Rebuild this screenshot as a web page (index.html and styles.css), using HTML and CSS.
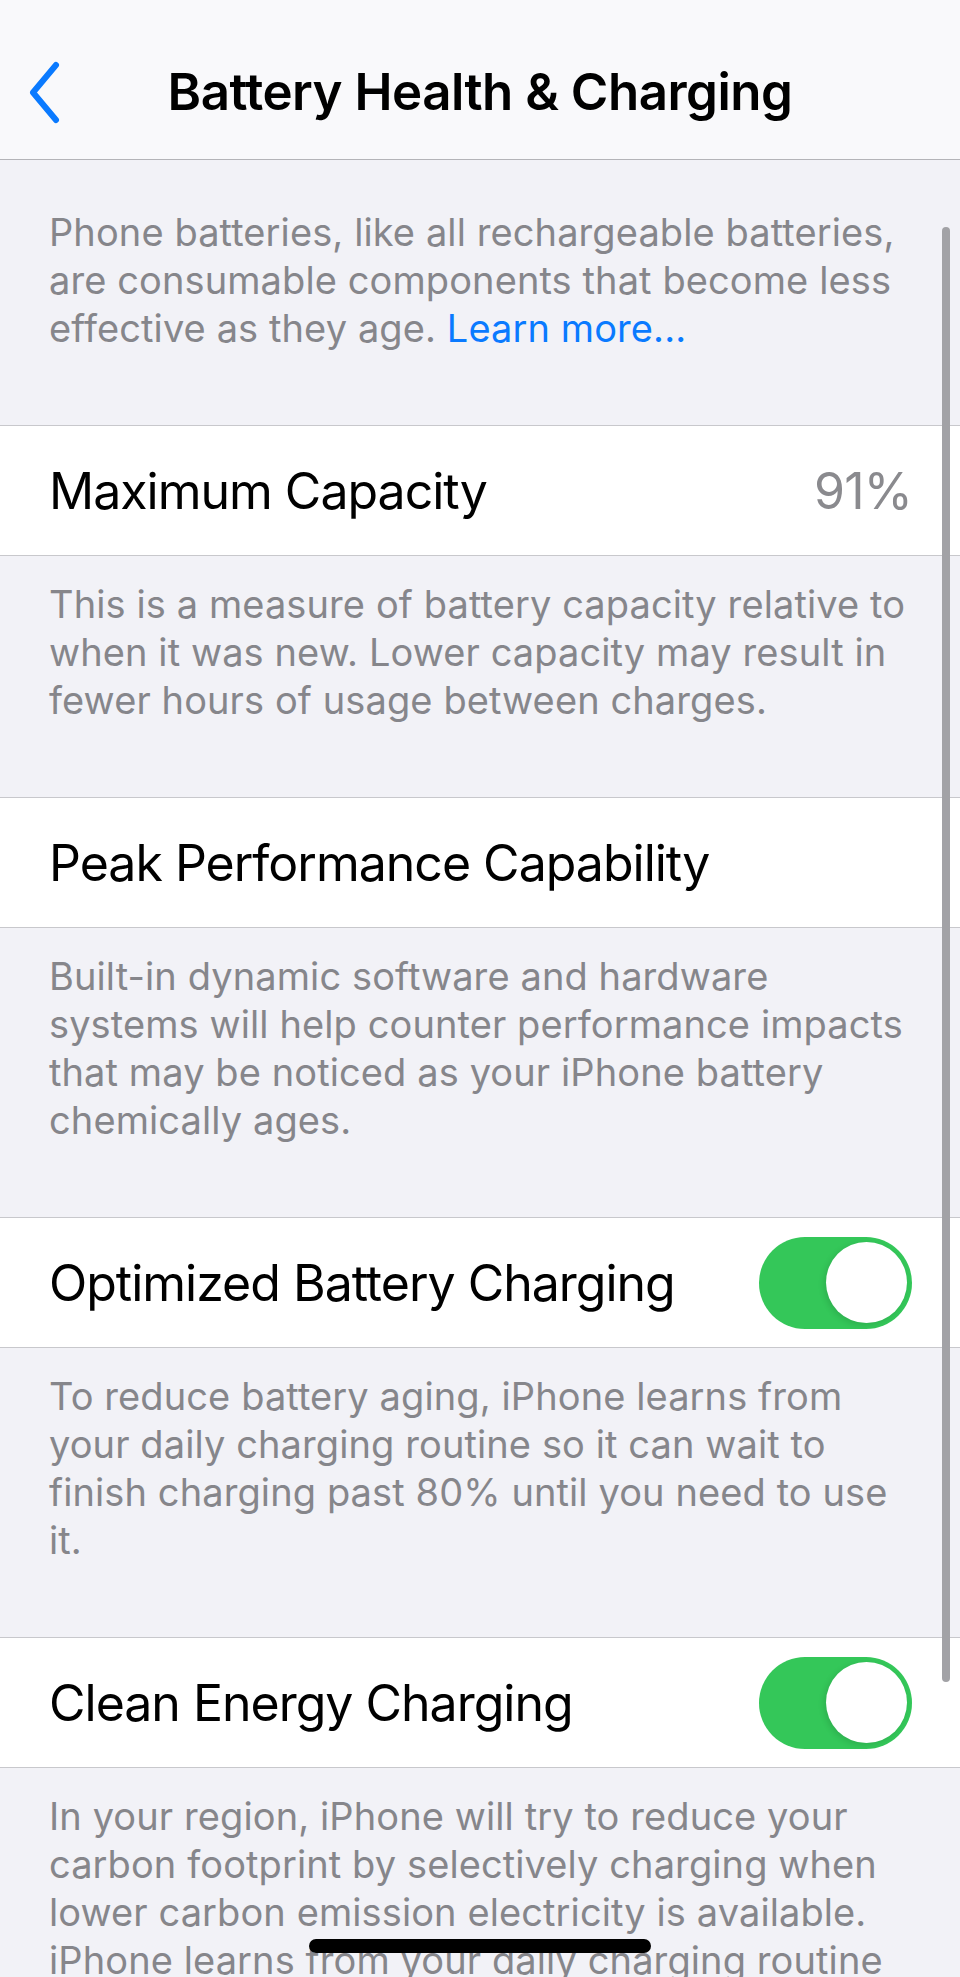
FILE: index.html
```html
<!DOCTYPE html>
<html lang="en">
<head>
    <meta charset="UTF-8">
    <meta name="viewport" content="width=device-width, initial-scale=1.0">
    <title>Battery Health &amp; Charging</title>
    <link rel="stylesheet" href="styles.css">
</head>
<body>
    <header class="nav">
        <svg class="back" width="40" height="64" viewBox="0 0 40 64">
            <path d="M32 5 L9 32.5 L32 60" fill="none" stroke="#0a7aff" stroke-width="6" stroke-linecap="round" stroke-linejoin="round"/>
        </svg>
        <h1>Battery Health &amp; Charging</h1>
    </header>

    <main class="list">
        <p class="note first">Phone batteries, like all rechargeable batteries,<br>are consumable components that become less<br>effective as they age. <a href="#">Learn more...</a></p>

        <div class="row">
            <span class="label">Maximum Capacity</span>
            <span class="value">91%</span>
        </div>
        <p class="note">This is a measure of battery capacity relative to<br>when it was new. Lower capacity may result in<br>fewer hours of usage between charges.</p>

        <div class="row">
            <span class="label">Peak Performance Capability</span>
        </div>
        <p class="note">Built-in dynamic software and hardware<br>systems will help counter performance impacts<br>that may be noticed as your iPhone battery<br>chemically ages.</p>

        <div class="row">
            <span class="label">Optimized Battery Charging</span>
            <span class="switch on"><span class="knob"></span></span>
        </div>
        <p class="note">To reduce battery aging, iPhone learns from<br>your daily charging routine so it can wait to<br>finish charging past 80% until you need to use<br>it.</p>

        <div class="row">
            <span class="label">Clean Energy Charging</span>
            <span class="switch on"><span class="knob"></span></span>
        </div>
        <p class="note">In your region, iPhone will try to reduce your<br>carbon footprint by selectively charging when<br>lower carbon emission electricity is available.<br>iPhone learns from your daily charging routine</p>
    </main>

    <div class="scrollbar"></div>
    <div class="home-bar"></div>
</body>
</html>
```

FILE: styles.css
```css
body {
    margin: 0;
    height: 1977px;
    overflow: hidden;
    background: #f2f2f7;
    font-family: Inter, "Noto Sans", sans-serif;
    color: #000;
}
.nav {
    height: 159px;
    background: #f9f9fb;
    border-bottom: 1.5px solid #b4b4b8;
    display: flex;
    align-items: center;
    justify-content: center;
    position: relative;
}
.nav .back {
    position: absolute;
    left: 24px;
    top: 60px;
}
.nav h1 {
    margin: 0;
    font-size: 51px;
    font-weight: 600;
    letter-spacing: -0.5px;
    padding-top: 24px;
}
.note {
    margin: 0;
    padding: 24px 24px 73px 49px;
    font-size: 38px;
    line-height: 48px;
    color: #86868b;
    letter-spacing: 0.1px;
}
.note.first { padding-top: 48px; }
.note a {
    color: #0a7aff;
    text-decoration: none;
}
.row {
    height: 129px;
    background: #fff;
    border-top: 1px solid #c8c8cc;
    border-bottom: 1px solid #c8c8cc;
    display: flex;
    align-items: center;
    justify-content: space-between;
    padding: 0 48px 0 49px;
}
.label {
    font-size: 50px;
    letter-spacing: -1px;
}
.value {
    font-size: 50px;
    color: #8a8a8e;
    letter-spacing: -0.8px;
}
.switch {
    width: 153px;
    height: 92px;
    border-radius: 46px;
    background: #e9e9eb;
    display: flex;
    align-items: center;
    padding: 0 5px;
    box-sizing: border-box;
}
.switch.on {
    background: #34c759;
    justify-content: flex-end;
}
.knob {
    width: 81px;
    height: 81px;
    border-radius: 50%;
    background: #fff;
    box-shadow: -2px 2px 6px rgba(0,0,0,0.12);
}
.scrollbar {
    position: absolute;
    left: 942px;
    top: 227px;
    width: 8px;
    height: 1455px;
    border-radius: 4px;
    background: #a2a2a6;
}
.home-bar {
    position: absolute;
    left: 309px;
    top: 1939px;
    width: 342px;
    height: 14px;
    border-radius: 7px;
    background: #000;
}
```
